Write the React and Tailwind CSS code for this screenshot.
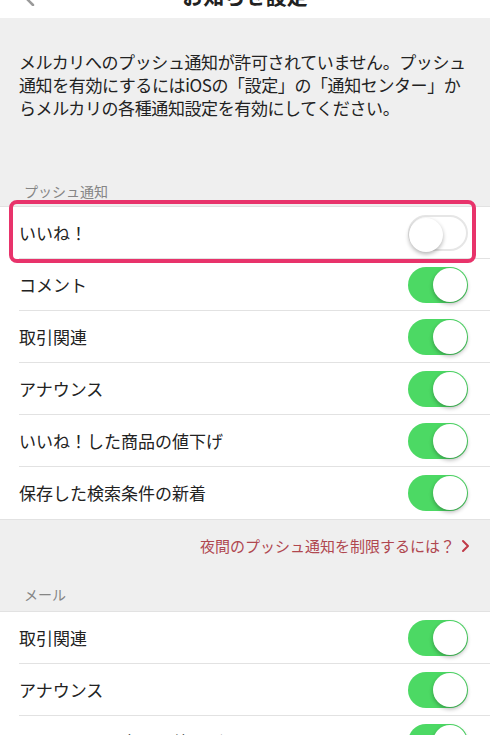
import React from "react";

function Toggle({ on }) {
  return (
    <div
      className={
        "relative w-[60px] h-[36px] rounded-full shrink-0 " +
        (on ? "bg-[#4cd964]" : "bg-white border-[2px] border-[#e6e6e6]")
      }
    >
      <div
        className={
          "absolute top-[1px] w-[34px] h-[34px] rounded-full bg-white shadow-[0_2px_4px_rgba(0,0,0,0.3)] " +
          (on ? "right-[1px]" : "left-[-1px] top-[-1px]")
        }
      />
    </div>
  );
}

function Row({ label, on = true, last = false }) {
  return (
    <div className="pl-[19px] bg-white">
      <div
        className={
          "h-[52px] flex items-center justify-between pr-[22px] " +
          (last ? "" : "border-b border-[#e2e2e2]")
        }
      >
        <span className="text-[17px] text-[#222]">{label}</span>
        <Toggle on={on} />
      </div>
    </div>
  );
}

export default function App() {
  const font = { fontFamily: '"Noto Sans CJK JP", "Noto Sans", sans-serif' };
  return (
    <div className="w-[490px] h-[735px] overflow-hidden bg-[#efefef]" style={font}>
      {/* header */}
      <div className="h-[18px] bg-white overflow-hidden relative">
        <div className="mt-[-18px] h-[26px] flex items-center justify-center">
          <span className="text-[21px] font-bold text-[#222] leading-none">お知らせ設定</span>
        </div>
        <svg className="absolute left-[22px] top-[-10px]" width="16" height="16" viewBox="0 0 16 16">
          <path d="M11 1 L4 8 L11 15" fill="none" stroke="#9a9a9a" strokeWidth="2.5" strokeLinecap="round" />
        </svg>
      </div>

      {/* description */}
      <div className="px-[19px] pt-[32px] pb-[74px] text-[17px] leading-[23px] text-[#222] tracking-[-0.4px]">
        メルカリへのプッシュ通知が許可されていません。プッシュ通知を有効にするにはiOSの「設定」の「通知センター」からメルカリの各種通知設定を有効にしてください。
      </div>

      <div className="pl-[24px] text-[14px] leading-[20px] text-[#858585] pb-[5px] -mt-[12px]">プッシュ通知</div>

      <div className="relative border-t border-b border-[#e2e2e2]">
        <Row label="いいね！" on={false} />
        <div className="absolute left-[9px] top-[-7px] w-[467px] h-[63px] border-[4px] border-[#e8336b] rounded-[8px] pointer-events-none" />
        <Row label="コメント" />
        <Row label="取引関連" />
        <Row label="アナウンス" />
        <Row label="いいね！した商品の値下げ" />
        <Row label="保存した検索条件の新着" last />
      </div>

      <div className="h-[52px] flex items-center justify-end pr-[20px] text-[15px] text-[#b0474f]">
        <span>夜間のプッシュ通知を制限するには？</span>
        <svg className="ml-[6px]" width="9" height="14" viewBox="0 0 9 14">
          <path d="M2 2 L7 7 L2 12" fill="none" stroke="#c03a48" strokeWidth="2" strokeLinecap="round" strokeLinejoin="round" />
        </svg>
      </div>

      <div className="pl-[24px] pt-[12px] pb-[7px] text-[14px] leading-[20px] text-[#858585]">メール</div>

      <div className="border-t border-[#e2e2e2]">
        <Row label="取引関連" />
        <Row label="アナウンス" />
        <Row label="いいね！した商品の値下げ" />
      </div>
    </div>
  );
}
